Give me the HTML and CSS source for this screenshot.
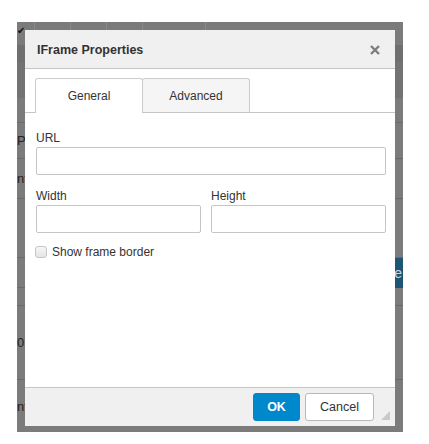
FILE: index.html
```html
<!DOCTYPE html>
<html>
<head>
<meta charset="utf-8">
<link rel="stylesheet" href="styles.css">
</head>
<body>
<div class="backdrop">
  <div class="brow toolbar">
    <span class="tb tb-check">✔</span>
    <span class="tb tb-sep"></span>
    <span class="tb tb-sep"></span>
    <span class="tb tb-sep"></span>
    <span class="tb tb-sep wide"></span>
  </div>
  <div class="brow r1"></div>
  <div class="brow r2"></div>
  <div class="brow r3"></div>
  <div class="brow r4"><span class="btxt">P</span></div>
  <div class="brow r5"><span class="btxt">nt</span></div>
  <div class="brow r6"></div>
  <div class="brow r7"><span class="bluebtn">e</span></div>
  <div class="brow r8"></div>
  <div class="brow r9"><span class="btxt">0</span></div>
  <div class="brow r10"><span class="btxt">nt</span></div>

  <div class="dialog">
    <div class="dlg-head">
      <span class="dlg-title">IFrame Properties</span>
      <svg class="dlg-close" width="10" height="10" viewBox="0 0 10 10"><path d="M1 1L9 9M9 1L1 9" stroke="#7e7e7e" stroke-width="2.4" stroke-linecap="butt"/></svg>
    </div>
    <div class="dlg-body">
      <div class="tabs">
        <div class="tab active">General</div>
        <div class="tab">Advanced</div>
      </div>
      <div class="form">
        <label class="lbl">URL</label>
        <div class="inp"></div>
        <div class="pair">
          <div class="col">
            <label class="lbl">Width</label>
            <div class="inp"></div>
          </div>
          <div class="col">
            <label class="lbl">Height</label>
            <div class="inp"></div>
          </div>
        </div>
        <div class="check">
          <span class="box"></span>
          <span class="check-text">Show frame border</span>
        </div>
      </div>
    </div>
    <div class="dlg-foot">
      <button class="btn primary">OK</button>
      <button class="btn">Cancel</button>
      <span class="resize"></span>
    </div>
  </div>
</div>
</body>
</html>
```

FILE: styles.css
```css
html, body {
  margin: 0;
  padding: 0;
  background: #ffffff;
}
body {
  font-family: "Liberation Sans", Arial, sans-serif;
  color: #333333;
}
.backdrop {
  position: relative;
  margin: 22px 0 0 17px;
  width: 386px;
  height: 410px;
  background: #7b7b7b;
  overflow: hidden;
  display: flex;
  flex-direction: column;
}
.brow {
  flex: none;
  display: flex;
  align-items: center;
  box-sizing: border-box;
  border-bottom: 1px solid #6a6a6a;
  font-size: 14px;
  color: #1e1e1e;
}
.toolbar {
  height: 23px;
  border-bottom: none;
  align-items: flex-start;
}
.tb {
  height: 10px;
}
.tb-check {
  width: 17px;
  font-size: 10px;
  line-height: 10px;
  padding-top: 4px;
  color: #111111;
}
.tb-sep {
  width: 35px;
  border-left: 1px solid #8a8a8a;
}
.tb-sep.wide {
  width: 62px;
  border-right: 1px solid #8a8a8a;
}
.r1 { height: 17px; background: #6f6f6f; border-bottom: none; }
.r2 { height: 36px; background: #737373; border-bottom: none; }
.r3 { height: 25px; }
.r4 { height: 36px; }
.r5 { height: 40px; }
.r6 { height: 59px; }
.r7 { height: 30px; }
.r8 { height: 18px; }
.r9 { height: 74px; }
.r10 { height: 52px; border-bottom: none; }
.btxt {
  margin-left: 0;
  font-size: 13px;
  color: #222222;
}
.bluebtn {
  margin-left: auto;
  width: 40px;
  height: 30px;
  background: #1c5674;
  color: #c8d6de;
  font-size: 14px;
  line-height: 30px;
  text-align: right;
  box-sizing: border-box;
  padding-right: 1px;
}

.dialog {
  position: absolute;
  left: 8px;
  top: 8px;
  width: 370px;
  height: 396px;
  background: #ffffff;
  display: flex;
  flex-direction: column;
}
.dlg-head {
  flex: none;
  height: 38px;
  background: #f0f0f0;
  border-bottom: 1px solid #c5c5c5;
  display: flex;
  align-items: center;
  padding: 0 15px 0 12px;
}
.dlg-title {
  font-size: 12.5px;
  font-weight: bold;
  color: #333333;
  flex: 1;
  padding-top: 1px;
}
.dlg-close {
  display: block;
  margin-top: 2px;
}
.dlg-body {
  flex: 1;
}
.tabs {
  display: flex;
  padding: 9px 0 0 10px;
  border-bottom: 1px solid #c5c5c5;
}
.tab {
  width: 108px;
  height: 34px;
  box-sizing: border-box;
  border: 1px solid #cccccc;
  border-bottom: none;
  border-radius: 3px 3px 0 0;
  background: #f5f5f5;
  font-size: 12px;
  line-height: 34px;
  text-align: center;
  color: #333333;
  margin-left: -1px;
}
.tab.active {
  margin-left: 0;
  background: #ffffff;
  height: 35px;
  margin-bottom: -1px;
  position: relative;
  z-index: 1;
}
.form {
  padding: 17px 9px 0 11px;
  display: flex;
  flex-direction: column;
}
.lbl {
  display: block;
  font-size: 12px;
  line-height: 16px;
  color: #333333;
  margin-bottom: 1px;
}
.inp {
  height: 28px;
  box-sizing: border-box;
  border: 1px solid #c5c5c5;
  border-radius: 2px;
  background: #ffffff;
}
.pair {
  display: grid;
  grid-template-columns: 165px 1fr;
  column-gap: 10px;
  margin-top: 13px;
}
.check {
  display: flex;
  align-items: center;
  margin-top: 12px;
  height: 14px;
}
.box {
  width: 12px;
  height: 12px;
  box-sizing: border-box;
  border: 1px solid #c5c5c5;
  border-radius: 3px;
  background: linear-gradient(#f7f7f7, #e4e4e4);
  margin-left: -1px;
  margin-right: 5px;
}
.check-text {
  font-size: 12px;
  color: #333333;
}
.dlg-foot {
  flex: none;
  position: relative;
  background: #f0f0f0;
  border-top: 1px solid #c5c5c5;
  display: flex;
  justify-content: flex-end;
  align-items: flex-start;
  padding: 5px 21px 0 0;
  box-sizing: border-box;
  height: 39px;
  gap: 5px;
}
.btn {
  height: 28px;
  padding: 0;
  border: 1px solid #b8b8b8;
  border-radius: 3px;
  background: #ffffff;
  font-family: "Liberation Sans", Arial, sans-serif;
  font-size: 12.5px;
  color: #333333;
  width: 69px;
}
.btn.primary {
  width: 47px;
  background: #0088cc;
  border-color: #0088cc;
  color: #ffffff;
  font-weight: bold;
}
.resize {
  position: absolute;
  right: 5px;
  bottom: 6px;
  width: 0;
  height: 0;
  border-left: 9px solid transparent;
  border-bottom: 9px solid #c9c9c9;
}
```
